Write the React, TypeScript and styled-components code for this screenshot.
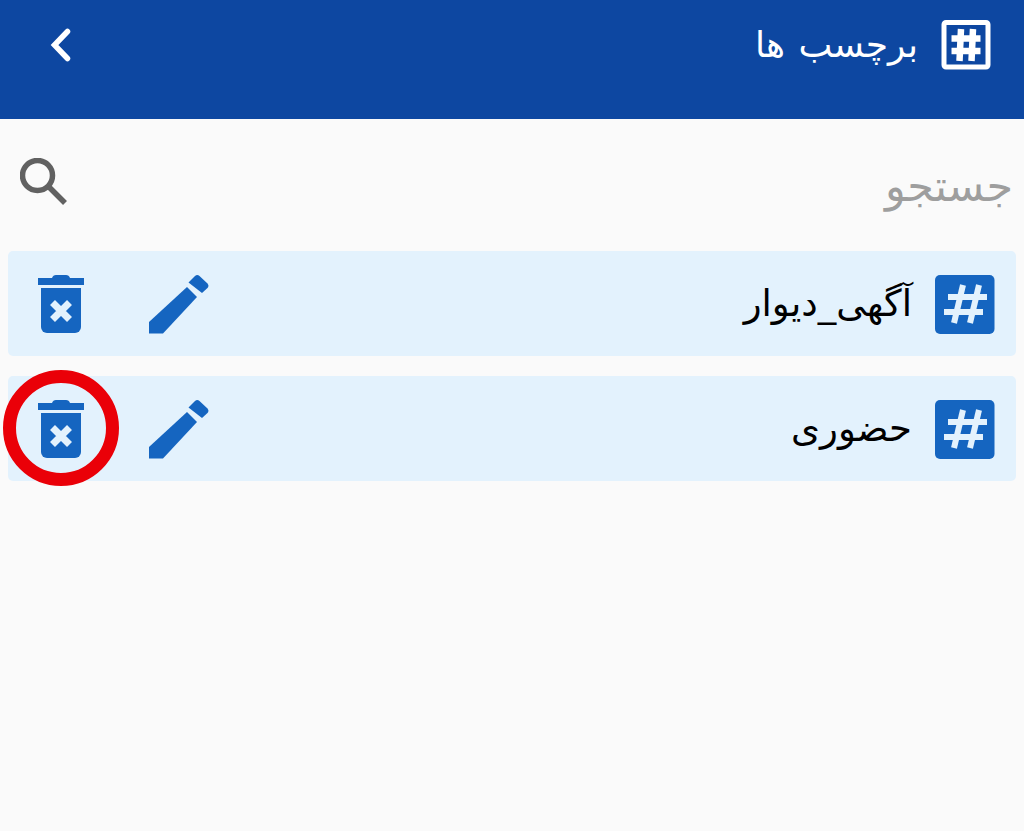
import React from "react";
import styled, { createGlobalStyle } from "styled-components";

const Global = createGlobalStyle`
  html, body { margin: 0; padding: 0; background: #fafafa; }
  body { font-family: "DejaVu Sans", "Noto Sans", sans-serif; }
`;

const Page = styled.div`
  position: relative;
  width: 1024px;
  height: 831px;
  overflow: hidden;
  background: #fafafa;
  display: flex;
  flex-direction: column;
`;

const Header = styled.header`
  height: 119px;
  box-sizing: border-box;
  background: #0d47a1;
  display: flex;
  align-items: flex-start;
  justify-content: space-between;
  padding: 20px 33px 0 50px;
`;

const BackButton = styled.div`
  display: flex;
  margin-top: 8px;
`;

const HeaderTitle = styled.div`
  display: flex;
  align-items: center;
  gap: 23px;
  height: 50px;
`;

const TitleText = styled.span`
  direction: rtl;
  color: #fff;
  font-size: 36px;
  line-height: 50px;
  word-spacing: 2px;
`;

const SearchBar = styled.div`
  height: 132px;
  box-sizing: border-box;
  display: flex;
  align-items: flex-start;
  justify-content: space-between;
  padding: 39px 11px 0 20px;
`;

const SearchHint = styled.span`
  direction: rtl;
  color: #9e9e9e;
  font-size: 43px;
  line-height: 56px;
`;

const List = styled.div`
  display: flex;
  flex-direction: column;
  gap: 20px;
  padding: 0 8px;
`;

const Row = styled.div`
  height: 105px;
  box-sizing: border-box;
  background: #e3f2fd;
  border-radius: 5px;
  display: flex;
  align-items: flex-start;
  padding: 23px 21px 0 30px;
`;

const Actions = styled.div`
  display: flex;
  align-items: flex-start;
  gap: 63px;
`;

const Label = styled.div`
  flex: 1;
  display: flex;
  justify-content: flex-end;
  align-items: center;
  gap: 23px;
  height: 60px;
`;

const LabelText = styled.span`
  direction: rtl;
  color: #000;
  font-size: 37px;
  line-height: 60px;
`;

const Highlight = styled.div`
  position: absolute;
  left: 3px;
  top: 370px;
  width: 116px;
  height: 116px;
  box-sizing: border-box;
  border: 13px solid #ea0008;
  border-radius: 50%;
`;

const HeaderHash = () => (
  <svg width="50" height="50" viewBox="0 0 50 50">
    <rect x="3" y="2.5" width="44" height="44.5" rx="2" fill="none" stroke="#fff" strokeWidth="5" />
    <g stroke="#fff" strokeWidth="6.5" fill="none">
      <path d="M20 9 L18.5 41" />
      <path d="M32 9 L30.5 41" />
      <path d="M10.5 18.5 H39.5" />
      <path d="M10.5 31 H39.5" />
    </g>
  </svg>
);

const TileHash = () => (
  <svg width="60" height="60" viewBox="0 0 60 60">
    <rect y="1" width="59.5" height="59" rx="5" fill="#1565c0" />
    <g stroke="#e3f2fd" strokeWidth="6" fill="none">
      <path d="M28 11 L19 49" />
      <path d="M44 11 L35 49" />
      <path d="M13 23 H52" />
      <path d="M9 38 H48" />
    </g>
  </svg>
);

const Back = () => (
  <svg width="22" height="34" viewBox="0 0 22 34">
    <path d="M17.5 3.5 L4.5 17 L17.5 30.5" fill="none" stroke="#fff" strokeWidth="5.5" strokeLinecap="round" strokeLinejoin="miter" />
  </svg>
);

const SearchIcon = () => (
  <svg width="48" height="48" viewBox="0 0 48 48" style={{ display: "block" }}>
    <circle cx="17.5" cy="17.5" r="15" fill="none" stroke="#616161" strokeWidth="5.5" />
    <path d="M28.5 28.5 L45 45" stroke="#616161" strokeWidth="5.5" fill="none" />
  </svg>
);

const Trash = () => (
  <svg width="48" height="60" viewBox="0 0 48 60">
    <path d="M0 4 H14 Q15 1 18 1 H28 Q31 1 32 4 H46 V11 H0 Z" fill="#1565c0" />
    <path d="M3 14 H43 V53 A6 6 0 0 1 37 59 H9 A6 6 0 0 1 3 53 Z" fill="#1565c0" />
    <path d="M14.5 28.5 L31.5 45.5 M31.5 28.5 L14.5 45.5" stroke="#e3f2fd" strokeWidth="7" fill="none" />
  </svg>
);

const Pencil = () => (
  <svg width="60" height="60" viewBox="0 0 60 60">
    <path d="M0 48 L38 13 L48 23 L14 59.5 H0 Z" fill="#1565c0" />
    <path d="M39.5 8.5 L46 2 A3.5 3.5 0 0 1 50.5 2 L58.5 9.5 A3.5 3.5 0 0 1 58.5 14 L53 19 Z" fill="#1565c0" />
  </svg>
);

const tags = ["آگهی_دیوار", "حضوری"];

export default function App() {
  return (
    <Page>
      <Global />
      <Header>
        <BackButton><Back /></BackButton>
        <HeaderTitle>
          <TitleText>برچسب ها</TitleText>
          <HeaderHash />
        </HeaderTitle>
      </Header>
      <SearchBar>
        <SearchIcon />
        <SearchHint>جستجو</SearchHint>
      </SearchBar>
      <List>
        {tags.map((tag) => (
          <Row key={tag}>
            <Actions>
              <Trash />
              <Pencil />
            </Actions>
            <Label>
              <LabelText>{tag}</LabelText>
              <TileHash />
            </Label>
          </Row>
        ))}
      </List>
      <Highlight />
    </Page>
  );
}
